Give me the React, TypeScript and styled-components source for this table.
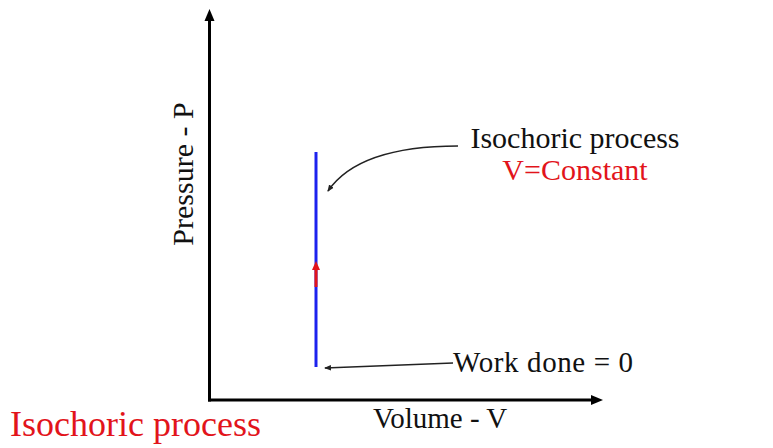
import styled, { createGlobalStyle } from 'styled-components'

const GlobalStyle = createGlobalStyle`
  html, body {
    margin: 0;
    padding: 0;
    background: #ffffff;
  }
`

const Page = styled.div`
  width: 773px;
  height: 448px;
  display: grid;
  background: #ffffff;
  overflow: hidden;
  font-family: "Liberation Serif", "Times New Roman", serif;
`

const Chart = styled.svg`
  grid-area: 1 / 1;
  width: 773px;
  height: 448px;
  display: block;
`

const Caption = styled.div`
  grid-area: 1 / 1;
  align-self: end;
  justify-self: start;
  padding: 0 0 6px 10px;
  color: #e2141b;
  font-size: 36px;
  line-height: 1;
`

const Label = styled.text<{ $red?: boolean; $size?: number }>`
  font-family: "Liberation Serif", "Times New Roman", serif;
  font-size: ${(p) => p.$size ?? 29}px;
  fill: ${(p) => (p.$red ? '#e2141b' : '#111111')};
`

const AXIS = '#000000'
const BLUE = '#1d22ee'
const RED = '#e2141b'

const App = () => {
  return (
    <>
      <GlobalStyle />
      <Page>
        <Chart viewBox="0 0 773 448" xmlns="http://www.w3.org/2000/svg">
          <defs>
            <marker id="thin" markerWidth="8" markerHeight="8" refX="6" refY="4" orient="auto" markerUnits="userSpaceOnUse">
              <path d="M0,1.2 L7,4 L0,6.8 Z" fill="#222" />
            </marker>
          </defs>

          {/* axes */}
          <line x1="209.5" y1="19" x2="209.5" y2="401.5" stroke={AXIS} strokeWidth="3" />
          <polygon points="209.5,9 204.5,21 214.5,21" fill={AXIS} />
          <line x1="208" y1="400" x2="593" y2="400" stroke={AXIS} strokeWidth="3" />
          <polygon points="603,400 591,395 591,405" fill={AXIS} />

          {/* isochoric line */}
          <line x1="316" y1="152" x2="316" y2="367" stroke={BLUE} strokeWidth="3" />
          <line x1="316" y1="268" x2="316" y2="287" stroke={RED} strokeWidth="3" />
          <polygon points="316,261 312,270 320,270" fill={RED} />

          {/* callouts */}
          <path d="M458,146 C405,146 352,156 328,191" fill="none" stroke="#222" strokeWidth="1.6" markerEnd="url(#thin)" />
          <line x1="453" y1="363" x2="325" y2="368" stroke="#222" strokeWidth="1.6" markerEnd="url(#thin)" />

          {/* labels */}
          <Label x="575" y="148" textAnchor="middle" $size={30}>Isochoric process</Label>
          <Label x="575" y="180" textAnchor="middle" $size={30} $red>V=Constant</Label>
          <Label x="453" y="372" $size={29} textLength="180">Work done = 0</Label>
          <Label x="373" y="428" $size={29}>Volume - V</Label>
          <Label transform="translate(193,174) rotate(-90)" x="0" y="0" textAnchor="middle" $size={30}>Pressure - P</Label>
        </Chart>
        <Caption>Isochoric process</Caption>
      </Page>
    </>
  )
}

export default App
